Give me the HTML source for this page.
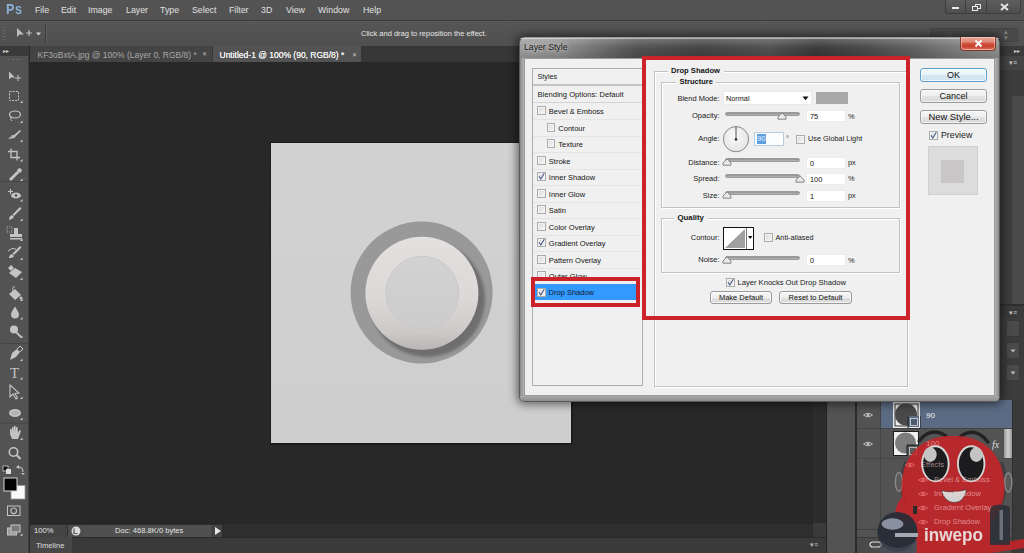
<!DOCTYPE html><html><head><meta charset="utf-8"><style>
*{margin:0;padding:0;box-sizing:border-box}
html,body{width:1024px;height:553px;overflow:hidden;background:#282828;font-family:"Liberation Sans",sans-serif}
.a{position:absolute;white-space:nowrap}
.mi{position:absolute;top:4px;font-size:8.8px;color:#e0e0e0;line-height:13px;white-space:nowrap}
.lst{font-size:7.4px;line-height:10px;color:#202020}
.lbl{font-size:7.4px;line-height:10px;color:#202020;text-align:right}
.cb{position:absolute;width:9px;height:9px;border:1px solid #ababab;background:linear-gradient(135deg,#d8d8d8,#f8f8f8);box-shadow:inset 0 0 0 1px #f4f4f4}
.inp{position:absolute;background:#fff;border:1px solid #e3e3e3;border-top-color:#abadb3;font-size:7.4px;line-height:10px;color:#111;padding-left:4px}
.btn{position:absolute;border:1px solid #707070;border-radius:2px;background:linear-gradient(#f2f2f2 0%,#ebebeb 50%,#dddddd 51%,#cfcfcf 100%);text-align:center;color:#111}
.fs{position:absolute;border:1px solid #d5dfe5;box-shadow:inset 1px 1px 0 #fff, 1px 1px 0 #fff;border-color:#bcbcbc}
.leg{position:absolute;background:#f0f0f0;font-size:7.6px;font-weight:bold;line-height:10px;color:#111;padding:0 3px}
.trk{position:absolute;height:4px;border-radius:2px;background:linear-gradient(#9a9a9a,#c8c8c8);border:1px solid #8a8a8a}
</style></head><body>
<div class="a" style="left:0px;top:0px;width:1024px;height:21px;background:#535353;border-bottom:1px solid #3a3a3a"></div>
<div class="a" style="left:5.5px;top:0px;font-size:15px;font-weight:bold;color:#8ab0d6;line-height:17px;letter-spacing:0.6px;transform:scaleX(0.84);transform-origin:0 0">Ps</div>
<div class="mi" style="left:35px">File</div>
<div class="mi" style="left:61px">Edit</div>
<div class="mi" style="left:88px">Image</div>
<div class="mi" style="left:126px">Layer</div>
<div class="mi" style="left:160px">Type</div>
<div class="mi" style="left:192px">Select</div>
<div class="mi" style="left:229px">Filter</div>
<div class="mi" style="left:261px">3D</div>
<div class="mi" style="left:286px">View</div>
<div class="mi" style="left:318px">Window</div>
<div class="mi" style="left:363px">Help</div>
<div class="a" style="left:945px;top:0px;width:21px;height:14px;background:linear-gradient(#5e5e5e,#4e4e4e);border:1px solid #3e3e3e;border-top:none;border-radius:0 0 0 3px"></div>
<div class="a" style="left:966px;top:0px;width:21px;height:14px;background:linear-gradient(#5e5e5e,#4e4e4e);border:1px solid #3e3e3e;border-top:none;border-left:none"></div>
<div class="a" style="left:987px;top:0px;width:34px;height:14px;background:linear-gradient(#5e5e5e,#4e4e4e);border:1px solid #3e3e3e;border-top:none;border-left:none;border-radius:0 0 3px 0"></div>
<div class="a" style="left:952px;top:7px;width:7px;height:2px;background:#e8e8e8"></div>
<div class="a" style="left:975px;top:4px;width:6px;height:5px;border:1px solid #e8e8e8"></div>
<div class="a" style="left:972px;top:6px;width:6px;height:5px;border:1px solid #e8e8e8;background:#555"></div>
<svg class="a" style="left:1000px;top:3px" width="9" height="8"><path d="M1 1 L8 7 M8 1 L1 7" stroke="#e8e8e8" stroke-width="1.8"/></svg>
<div class="a" style="left:0px;top:21px;width:1024px;height:26px;background:linear-gradient(#555,#4f4f4f);border-top:1px solid #5e5e5e;border-bottom:1px solid #333"></div>
<div class="a" style="left:2px;top:27px;width:4px;height:1px;background:#626262"></div>
<div class="a" style="left:2px;top:30px;width:4px;height:1px;background:#626262"></div>
<div class="a" style="left:2px;top:33px;width:4px;height:1px;background:#626262"></div>
<div class="a" style="left:2px;top:36px;width:4px;height:1px;background:#626262"></div>
<div class="a" style="left:2px;top:39px;width:4px;height:1px;background:#626262"></div>
<svg class="a" style="left:14px;top:26px" width="32" height="16" viewBox="0 0 32 16"><path d="M3 2 L3 11 L5.5 8.5 L10 8.5 Z" fill="#bdbdbd"/><path d="M12 7 H18 M15 4 V10" stroke="#bdbdbd" stroke-width="1.2"/><path d="M22 6.5 L27 6.5 L24.5 9.5 Z" fill="#d6d6d6"/></svg>
<div class="a" style="left:45px;top:24px;width:1px;height:20px;background:#3e3e3e;box-shadow:1px 0 0 #5e5e5e"></div>
<div class="a" style="left:361px;top:28.0px;font-size:7.5px;line-height:12px;color:#e6e6e6;font-weight:normal;">Click and drag to reposition the effect.</div>
<div class="a" style="left:930px;top:28px;width:88px;height:14px;background:#4a4a4a;border:1px solid #444;border-radius:2px"></div>
<div class="a" style="left:944px;top:29.0px;font-size:7.5px;line-height:12px;color:#5c5c5c;font-weight:normal;">10</div>
<div class="a" style="left:1004px;top:29px;font-size:7px;line-height:6px;color:#888">▴<br>▾</div>
<div class="a" style="left:0px;top:46px;width:1024px;height:16px;background:#373737"></div>
<div class="a" style="left:30px;top:46px;width:182px;height:16px;background:#444444"></div>
<div class="a" style="left:37.5px;top:49.0px;font-size:8.5px;line-height:12px;color:#a8a8a8;font-weight:normal;">KF3oBxtA.jpg @ 100% (Layer 0, RGB/8) *</div>
<div class="a" style="left:202px;top:48.0px;font-size:6px;line-height:12px;color:#bdbdbd;font-weight:normal;">✕</div>
<div class="a" style="left:213px;top:46px;width:148px;height:16px;background:#535353"></div>
<div class="a" style="left:219.5px;top:49.0px;font-size:8.5px;line-height:12px;color:#f2f2f2;font-weight:normal;text-shadow:0 0 0.4px #fff">Untitled-1 @ 100% (90, RGB/8) *</div>
<div class="a" style="left:352px;top:48.5px;font-size:6px;line-height:12px;color:#c8c8c8;font-weight:normal;">✕</div>
<div class="a" style="left:0px;top:46px;width:29px;height:10px;background:#3a3a3a"></div>
<div class="a" style="left:3px;top:48px;font-size:6px;line-height:7px;color:#cfcfcf">▸▸</div>
<div class="a" style="left:0px;top:56px;width:29px;height:497px;background:#535353;border-right:1px solid #404040"></div>
<div class="a" style="left:8.0px;top:59px;width:1.2px;height:1px;background:#767676"></div>
<div class="a" style="left:10.5px;top:59px;width:1.2px;height:1px;background:#767676"></div>
<div class="a" style="left:13.0px;top:59px;width:1.2px;height:1px;background:#767676"></div>
<div class="a" style="left:15.5px;top:59px;width:1.2px;height:1px;background:#767676"></div>
<div class="a" style="left:18.0px;top:59px;width:1.2px;height:1px;background:#767676"></div>
<div class="a" style="left:20.5px;top:59px;width:1.2px;height:1px;background:#767676"></div>
<svg class="a" style="left:0;top:0" width="30" height="553" viewBox="0 0 30 553"><path d="M9 71.5 L9 79.5 L11 77.5 L15 77.5 Z" fill="#c4c4c4"/><path d="M15 78.0 H21 M18 75.0 V81.0" stroke="#c4c4c4" stroke-width="1"/><rect x="9.5" y="91.5" width="9" height="9" fill="none" stroke="#c4c4c4" stroke-width="1" stroke-dasharray="2 1.2"/><path d="M20 103 L22.5 100.5 L22.5 103 Z" fill="#d0d0d0"/><ellipse cx="15" cy="114.5" rx="5.5" ry="3.5" fill="none" stroke="#c4c4c4" stroke-width="1.2"/><path d="M11 117 Q10 120 12 121" stroke="#c4c4c4" fill="none"/><path d="M20 123 L22.5 120.5 L22.5 123 Z" fill="#d0d0d0"/><path d="M9 139 L13 136 L20 130 L21 131 L14 138 Z" fill="#c4c4c4"/><path d="M9 139 Q12 134 15 136" stroke="#c4c4c4" fill="none"/><path d="M20 142 L22.5 139.5 L22.5 142 Z" fill="#d0d0d0"/><path d="M11 148.5 V157.5 H20 M8 151.5 H17 V160.5" stroke="#c4c4c4" stroke-width="1.3" fill="none"/><path d="M20 161.5 L22.5 159.0 L22.5 161.5 Z" fill="#d0d0d0"/><path d="M9 179 L17 171 L19 173 L11 181 Z" fill="#c4c4c4"/><circle cx="19.5" cy="170.5" r="2.2" fill="#c4c4c4"/><path d="M20 181 L22.5 178.5 L22.5 181 Z" fill="#d0d0d0"/><rect x="1" y="181" width="27" height="1" fill="#454545"/><ellipse cx="16" cy="195.5" rx="5" ry="3" fill="#c4c4c4"/><circle cx="16" cy="195.5" r="1.3" fill="#535353"/><path d="M8 191.5 H13 M10.5 189.0 V194.0" stroke="#c4c4c4" stroke-width="1.2"/><path d="M20 201.5 L22.5 199.0 L22.5 201.5 Z" fill="#d0d0d0"/><path d="M20 207 L21.5 208.5 L14 216 L12.5 214.5 Z" fill="#c4c4c4"/><path d="M12 215 Q9 216 9 220 Q13 219 14 217 Z" fill="#c4c4c4"/><path d="M20 221 L22.5 218.5 L22.5 221 Z" fill="#d0d0d0"/><rect x="14" y="228" width="4" height="6" fill="#c4c4c4"/><rect x="10" y="234" width="12" height="3" fill="#c4c4c4"/><rect x="10" y="238" width="12" height="1.5" fill="#c4c4c4"/><rect x="7" y="227" width="5" height="5" fill="none" stroke="#c4c4c4" stroke-width="0.8" stroke-dasharray="1 1"/><path d="M20 241 L22.5 238.5 L22.5 241 Z" fill="#d0d0d0"/><path d="M20 246 L21.5 247.5 L14 255 L12.5 253.5 Z" fill="#c4c4c4"/><path d="M12 254 Q9 255 9 258 Q13 258 14 256 Z" fill="#c4c4c4"/><path d="M8 251 Q12 247 16 249" stroke="#c4c4c4" fill="none"/><path d="M20 260 L22.5 257.5 L22.5 260 Z" fill="#d0d0d0"/><path d="M9 273 L15 268 L22 272 L16 278 Z" fill="#c4c4c4"/><path d="M8 268 L11 271 L14 268 L11 265 Z" fill="#c4c4c4"/><path d="M20 280 L22.5 277.5 L22.5 280 Z" fill="#d0d0d0"/><path d="M9 294 L15 289 L21 295 L15 300 Z" fill="#c4c4c4"/><path d="M13 291 Q12 286 15 287" stroke="#c4c4c4" fill="none"/><circle cx="21" cy="298" r="1.5" fill="#c4c4c4"/><path d="M20 301 L22.5 298.5 L22.5 301 Z" fill="#d0d0d0"/><path d="M15 306.6 Q11 312.6 11 314.6 A4 4 0 0 0 19 314.6 Q19 312.6 15 306.6 Z" fill="#c4c4c4"/><path d="M20 319.6 L22.5 317.1 L22.5 319.6 Z" fill="#d0d0d0"/><circle cx="14" cy="329.5" r="4" fill="#c4c4c4"/><path d="M16.5 332.5 L21 337" stroke="#c4c4c4" stroke-width="1.8"/><path d="M20 338 L22.5 335.5 L22.5 338 Z" fill="#d0d0d0"/><rect x="1" y="343" width="27" height="1" fill="#454545"/><rect x="1" y="422.5" width="27" height="1" fill="#454545"/><path d="M10 360 L12 353 L17 349 L20 352 L16 357 Z" fill="#c4c4c4"/><path d="M17 349 L20 346 L23 349 L20 352" fill="none" stroke="#c4c4c4"/><path d="M20 361 L22.5 358.5 L22.5 361 Z" fill="#d0d0d0"/><text x="14.5" y="377.9" font-family="Liberation Serif" font-size="15" fill="#c4c4c4" text-anchor="middle">T</text><path d="M20 379.4 L22.5 376.9 L22.5 379.4 Z" fill="#d0d0d0"/><path d="M10 385 L10 397 L13 394 L16 399 L17.5 398 L15 393.5 L19 393 Z" fill="none" stroke="#c4c4c4" stroke-width="1.1"/><path d="M20 399 L22.5 396.5 L22.5 399 Z" fill="#d0d0d0"/><ellipse cx="15" cy="413" rx="6" ry="4" fill="#c4c4c4"/><ellipse cx="15" cy="413" rx="4" ry="2.3" fill="#9a9a9a" opacity="0.4"/><path d="M20 420 L22.5 417.5 L22.5 420 Z" fill="#d0d0d0"/><path d="M10 434 L10 429 L11.5 429 L12 432 L12 427 L13.5 427 L14 432 L14 426 L15.5 426 L16 432 L16 427 L17.5 427 L18 433 L19.5 430 L21 431 L18 439 L12 439 Z" fill="#c4c4c4"/><path d="M20 440 L22.5 437.5 L22.5 440 Z" fill="#d0d0d0"/><circle cx="13.5" cy="452.0" r="4.2" fill="none" stroke="#c4c4c4" stroke-width="1.6"/><path d="M16.5 455.0 L20.5 459.0" stroke="#c4c4c4" stroke-width="2"/><rect x="3" y="466" width="5" height="5" fill="#111" stroke="#ccc" stroke-width="0.8"/><rect x="6" y="469" width="5" height="5" fill="#ddd"/><path d="M18 467 Q23 467 23 472" stroke="#c4c4c4" fill="none" stroke-width="1.1"/><path d="M16 467 L19 465 L19 469 Z M21 473 L23 475 L25 473 Z" fill="#c4c4c4"/><rect x="11" y="485.5" width="14" height="13.5" fill="#fafafa" stroke="#9a9a9a" stroke-width="0.8"/><rect x="4" y="478" width="13" height="13" fill="#050505" stroke="#d8d8d8" stroke-width="1"/><rect x="7.5" y="506" width="12.5" height="9.5" fill="none" stroke="#c4c4c4" stroke-width="1"/><circle cx="13.7" cy="510.8" r="2.8" fill="none" stroke="#c4c4c4" stroke-width="1.1"/><rect x="7.5" y="528" width="9" height="7" fill="#9a9a9a" stroke="#c4c4c4" stroke-width="1"/><rect x="11" y="525" width="9" height="7" fill="#7a7a7a" stroke="#c4c4c4" stroke-width="1"/><path d="M20 535.7 L22.5 533.2 L22.5 535.7 Z" fill="#d0d0d0"/></svg>
<div class="a" style="left:30px;top:62px;width:797px;height:463px;background:#282828"></div>
<div class="a" style="left:813px;top:62px;width:13px;height:462px;background:#2c2c2c"></div>
<div class="a" style="left:30px;top:524px;width:796px;height:13px;background:#2c2c2c"></div>
<div class="a" style="left:269.5px;top:141.5px;width:303px;height:303px;background:#1c1c1c;filter:blur(0.6px)"></div>
<div class="a" style="left:271px;top:143px;width:300px;height:300px;background:linear-gradient(#d3d2d2,#cfcece)"></div>
<svg class="a" style="left:340px;top:210px" width="170" height="170" viewBox="340 210 170 170"><defs><linearGradient id="kn" x1="0" y1="0" x2="0" y2="1"><stop offset="0" stop-color="#e4e0e0"/><stop offset="0.55" stop-color="#dcd8d8"/><stop offset="0.85" stop-color="#cdc9c9"/><stop offset="1" stop-color="#b9b5b5"/></linearGradient><linearGradient id="ic" x1="0" y1="0" x2="0" y2="1"><stop offset="0" stop-color="#d2d2d2"/><stop offset="1" stop-color="#cccccc"/></linearGradient><filter id="bl" x="-20%" y="-20%" width="140%" height="140%"><feGaussianBlur stdDeviation="1.6"/></filter></defs><circle cx="421.6" cy="292.5" r="71" fill="#999999"/><circle cx="427" cy="299" r="58" fill="#6e6e6e" filter="url(#bl)"/><circle cx="421.9" cy="293.2" r="56.5" fill="url(#kn)"/><circle cx="422.3" cy="292.8" r="36.5" fill="url(#ic)" stroke="#c6c4c4" stroke-width="0.8"/></svg>
<div class="a" style="left:30px;top:523px;width:796px;height:14px;background:#2e2e2e;border-top:1px solid #262626"></div>
<div class="a" style="left:813px;top:523px;width:13px;height:14px;background:#3a3a3a"></div>
<div class="a" style="left:30px;top:525px;width:37px;height:12px;background:#444444"></div>
<div class="a" style="left:34px;top:524.5px;font-size:7.6px;line-height:12px;color:#e4e4e4;font-weight:normal;">100%</div>
<div class="a" style="left:68px;top:525px;width:16px;height:12px;background:#4e4e4e"></div>
<svg class="a" style="left:69px;top:525px" width="14" height="12"><circle cx="7" cy="6" r="4.5" fill="#dadada"/><path d="M5 3.5 V8.5 H8.5" stroke="#555" stroke-width="1.2" fill="none"/></svg>
<div class="a" style="left:84px;top:525px;width:127px;height:12px;background:#505050"></div>
<div class="a" style="left:115px;top:524.5px;font-size:7.6px;line-height:12px;color:#e4e4e4;font-weight:normal;">Doc: 468.8K/0 bytes</div>
<div class="a" style="left:211px;top:525px;width:11px;height:12px;background:#444444"></div>
<svg class="a" style="left:213px;top:526px" width="9" height="10"><path d="M2 1 L8 5 L2 9 Z" fill="#e6e6e6"/></svg>
<div class="a" style="left:30px;top:537px;width:797px;height:16px;background:#3a3a3a;border-top:1px solid #2a2a2a"></div>
<div class="a" style="left:30px;top:537px;width:42px;height:16px;background:#474747"></div>
<div class="a" style="left:36px;top:539.5px;font-size:7.6px;line-height:12px;color:#dedede;font-weight:normal;">Timeline</div>
<div class="a" style="left:810px;top:540px;font-size:7px;line-height:9px;color:#bbb">▾≡</div>
<div class="a" style="left:29px;top:46px;width:1px;height:507px;background:#2a2a2a"></div>
<div class="a" style="left:826px;top:62px;width:1px;height:491px;background:#222"></div>
<div class="a" style="left:827px;top:46px;width:28px;height:507px;background:#535353"></div>
<div class="a" style="left:855px;top:46px;width:2px;height:507px;background:#2c2c2c"></div>
<div class="a" style="left:857px;top:46px;width:167px;height:507px;background:#3f3f3f"></div>
<div class="a" style="left:999px;top:46px;width:25px;height:10px;background:#3a3a3a"></div>
<div class="a" style="left:1014px;top:48px;font-size:6px;line-height:7px;color:#cfcfcf">▸▸</div>
<div class="a" style="left:999px;top:56px;width:25px;height:14px;background:#454545"></div>
<div class="a" style="left:1009px;top:58px;font-size:7px;line-height:9px;color:#c8c8c8">▾≡</div>
<div class="a" style="left:999px;top:70px;width:25px;height:330px;background:#3c3c3c"></div>
<div class="a" style="left:1012px;top:96px;width:12px;height:208px;background:#4a4a4a"></div>
<div class="a" style="left:999px;top:304px;width:25px;height:2px;background:#2e2e2e"></div>
<div class="a" style="left:999px;top:306px;width:25px;height:11px;background:#3a3a3a"></div>
<div class="a" style="left:1009px;top:308px;font-size:7px;line-height:9px;color:#c8c8c8">▾≡</div>
<div class="a" style="left:1006px;top:320px;width:14px;height:17px;background:#4a4a4a;border:1px solid #3a3a3a"></div>
<div class="a" style="left:1006px;top:342px;width:14px;height:17px;background:#4a4a4a;border:1px solid #3a3a3a"></div>
<div class="a" style="left:1006px;top:364px;width:14px;height:17px;background:#4a4a4a;border:1px solid #3a3a3a"></div>
<svg class="a" style="left:1010px;top:349px" width="6" height="4"><path d="M0.5 0.5 L5.5 0.5 L3 3.5 Z" fill="#bbb"/></svg>
<svg class="a" style="left:1010px;top:371px" width="6" height="4"><path d="M0.5 0.5 L5.5 0.5 L3 3.5 Z" fill="#bbb"/></svg>
<div class="a" style="left:857px;top:400px;width:155px;height:153px;background:#535353"></div>
<div class="a" style="left:1012px;top:400px;width:12px;height:153px;background:#3a3a3a;border-left:1px solid #2e2e2e"></div>
<div class="a" style="left:880px;top:400px;width:1px;height:130px;background:#444"></div>
<div class="a" style="left:881px;top:400px;width:131px;height:28px;background:#5b6b84"></div>
<div class="a" style="left:857px;top:428px;width:155px;height:1px;background:#444"></div>
<div class="a" style="left:857px;top:458px;width:155px;height:1px;background:#484848"></div>
<svg class="a" style="left:862px;top:410.5px" width="12" height="8"><path d="M1.5 4 Q6 0.5 10.5 4 Q6 7.5 1.5 4 Z" fill="none" stroke="#bcbcbc" stroke-width="1"/><circle cx="6" cy="4" r="1.5" fill="#bcbcbc"/></svg>
<svg class="a" style="left:862px;top:440px" width="12" height="8"><path d="M1.5 4 Q6 0.5 10.5 4 Q6 7.5 1.5 4 Z" fill="none" stroke="#bcbcbc" stroke-width="1"/><circle cx="6" cy="4" r="1.5" fill="#bcbcbc"/></svg>
<svg class="a" style="left:893px;top:402px" width="28" height="27"><rect x="0.5" y="0.5" width="26" height="25" fill="#f4f4f4" stroke="#e8e8e8"/><rect x="2" y="2" width="23" height="22" fill="#ececec" stroke="#1e1e1e" stroke-width="0.9"/><circle cx="13" cy="12.5" r="11" fill="#4a4a4a"/><rect x="15" y="14" width="12" height="12" fill="#5b6b84"/><path d="M15 14 V26 H27 V14" fill="none" stroke="#1a1a1a" stroke-width="1"/><path d="M15.5 25.5 H26.5 V14" fill="none" stroke="#eee" stroke-width="1"/><rect x="17.5" y="16.5" width="7" height="7" fill="#4e5a6e" stroke="#ddd" stroke-width="0.8"/></svg>
<div class="a" style="left:926px;top:409.5px;font-size:8px;line-height:12px;color:#f0f0f0;font-weight:normal;">90</div>
<svg class="a" style="left:893px;top:431px" width="26" height="25"><rect x="0.5" y="0.5" width="25" height="24" fill="#f0f0f0" stroke="#1e1e1e" stroke-width="1"/><circle cx="12.5" cy="12" r="10.5" fill="#7c7c7c"/><rect x="14" y="14" width="12" height="11" fill="#535353"/><path d="M14 14 V25 M14 14 H26" fill="none" stroke="#1a1a1a" stroke-width="1"/><rect x="16.5" y="16.5" width="7" height="7" fill="#5a5a5a" stroke="#ccc" stroke-width="0.8"/></svg>
<div class="a" style="left:992px;top:438.5px;font-size:10px;line-height:12px;color:#d8d8d8;font-weight:normal;font-family:'Liberation Serif'"><i>fx</i></div>
<div class="a" style="left:1004px;top:429px;width:8px;height:29px;background:linear-gradient(90deg,#9a9a9a,#d0d0d0,#9a9a9a)"></div>
<div class="a" style="left:857px;top:529px;width:155px;height:1px;background:#3e3e3e"></div>
<div class="a" style="left:857px;top:537px;width:155px;height:16px;background:#4a4a4a;border-top:1px solid #3a3a3a"></div>
<svg class="a" style="left:868px;top:540px" width="16" height="10"><rect x="2" y="2" width="11" height="5" rx="2.5" fill="none" stroke="#ddd" stroke-width="1.2"/></svg>
<div class="a" style="left:519px;top:37px;width:481px;height:365px;border-radius:6px 6px 5px 5px;background:linear-gradient(90deg,#8e8e8e,#a9a9a9 3%,#b4b4b4 50%,#a2a2a2 97%,#8a8a8a);border:1px solid #5a5a5a;border-top-color:#9a9a9a;box-shadow:0 0 10px 2px rgba(0,0,0,0.55)"></div>
<div class="a" style="left:520px;top:38px;width:479px;height:20px;border-radius:5px 5px 0 0;background:linear-gradient(90deg,#9a9a9a 0%,#8e8e8e 8%,#6e6e6e 16%,#505050 24%,#424242 38%,#4e4e4e 52%,#383838 62%,#474747 72%,#5e5e5e 82%,#7c7c7c 92%,#8c8c8c 100%)"></div>
<div class="a" style="left:520px;top:38px;width:479px;height:20px;border-radius:5px 5px 0 0;background:linear-gradient(rgba(255,255,255,0.25) 0,rgba(255,255,255,0.05) 40%,rgba(0,0,0,0) 60%,rgba(0,0,0,0.1) 100%)"></div>
<div class="a" style="left:520px;top:38px;width:479px;height:1px;background:rgba(255,255,255,0.45);border-radius:5px 5px 0 0"></div>
<div class="a" style="left:524px;top:42px;font-size:8.7px;line-height:11px;color:#111;text-shadow:0 0 3px rgba(230,230,230,0.9),0 0 6px rgba(220,220,220,0.6)">Layer Style</div>
<div class="a" style="left:960px;top:37px;width:36px;height:14px;border-radius:0 0 4px 4px;background:linear-gradient(#eaa898 0%,#e08a78 35%,#cc4a36 55%,#c84230 75%,#dc7a66 100%);border:1px solid #7a3a30;border-top:none;box-shadow:inset 0 0 0 1px rgba(255,215,205,0.55)"></div>
<svg class="a" style="left:974px;top:39px" width="9" height="9"><path d="M1.5 1.5 L7.5 7.5 M7.5 1.5 L1.5 7.5" stroke="#fff" stroke-width="2"/></svg>
<div class="a" style="left:520px;top:58px;width:4px;height:339px;background:linear-gradient(90deg,#8a8a8a,#b4b4b4)"></div>
<div class="a" style="left:995px;top:58px;width:4px;height:339px;background:linear-gradient(90deg,#b4b4b4,#8a8a8a)"></div>
<div class="a" style="left:520px;top:396px;width:479px;height:5px;background:linear-gradient(#a8a8a8,#8e8e8e);border-radius:0 0 4px 4px"></div>
<div class="a" style="left:524px;top:58px;width:471px;height:338px;background:#f0f0f0;border:1px solid #9a9a9a"></div>
<div class="a" style="left:532px;top:68px;width:111px;height:318px;background:#f0f0f0;border:1px solid #acacac"></div>
<div class="a" style="left:533px;top:84px;width:109px;height:2px;background:#c4c4c4"></div>
<div class="a" style="left:533px;top:102px;width:109px;height:1px;background:#d4d4d4"></div>
<div class="a" style="left:537.5px;top:71.0px;font-size:7.2px;line-height:12px;color:#202020;font-weight:normal;">Styles</div>
<div class="a" style="left:537.5px;top:88.5px;font-size:7.6px;line-height:12px;color:#202020;font-weight:normal;">Blending Options: Default</div>
<div class="cb" style="left:537px;top:106px;width:8.5px;height:8.5px"></div>
<div class="a" style="left:548.8px;top:106.0px;font-size:7.5px;line-height:12px;color:#141414;font-weight:normal;">Bevel &amp; Emboss</div>
<div class="a" style="left:533px;top:119px;width:109px;height:1px;background:#e4e4e4"></div>
<div class="cb" style="left:546.5px;top:123px;width:8.5px;height:8.5px"></div>
<div class="a" style="left:558.3px;top:122.5px;font-size:7.5px;line-height:12px;color:#141414;font-weight:normal;">Contour</div>
<div class="a" style="left:533px;top:136px;width:109px;height:1px;background:#e4e4e4"></div>
<div class="cb" style="left:546.5px;top:139px;width:8.5px;height:8.5px"></div>
<div class="a" style="left:558.3px;top:139.0px;font-size:7.5px;line-height:12px;color:#141414;font-weight:normal;">Texture</div>
<div class="a" style="left:533px;top:152px;width:109px;height:1px;background:#e4e4e4"></div>
<div class="cb" style="left:537px;top:156px;width:8.5px;height:8.5px"></div>
<div class="a" style="left:548.8px;top:155.5px;font-size:7.5px;line-height:12px;color:#141414;font-weight:normal;">Stroke</div>
<div class="a" style="left:533px;top:169px;width:109px;height:1px;background:#e4e4e4"></div>
<div class="cb" style="left:537px;top:172px;width:8.5px;height:8.5px"></div>
<svg class="a" style="left:537px;top:172px" width="8.5" height="8.5"><path d="M2 4.3 L3.8 7 L7.3 1.3" stroke="#4a5c88" stroke-width="1.1" fill="none"/></svg>
<div class="a" style="left:548.8px;top:172.0px;font-size:7.5px;line-height:12px;color:#141414;font-weight:normal;">Inner Shadow</div>
<div class="a" style="left:533px;top:185px;width:109px;height:1px;background:#e4e4e4"></div>
<div class="cb" style="left:537px;top:189px;width:8.5px;height:8.5px"></div>
<div class="a" style="left:548.8px;top:188.5px;font-size:7.5px;line-height:12px;color:#141414;font-weight:normal;">Inner Glow</div>
<div class="a" style="left:533px;top:202px;width:109px;height:1px;background:#e4e4e4"></div>
<div class="cb" style="left:537px;top:205px;width:8.5px;height:8.5px"></div>
<div class="a" style="left:548.8px;top:205.0px;font-size:7.5px;line-height:12px;color:#141414;font-weight:normal;">Satin</div>
<div class="a" style="left:533px;top:218px;width:109px;height:1px;background:#e4e4e4"></div>
<div class="cb" style="left:537px;top:222px;width:8.5px;height:8.5px"></div>
<div class="a" style="left:548.8px;top:221.5px;font-size:7.5px;line-height:12px;color:#141414;font-weight:normal;">Color Overlay</div>
<div class="a" style="left:533px;top:235px;width:109px;height:1px;background:#e4e4e4"></div>
<div class="cb" style="left:537px;top:238px;width:8.5px;height:8.5px"></div>
<svg class="a" style="left:537px;top:238px" width="8.5" height="8.5"><path d="M2 4.3 L3.8 7 L7.3 1.3" stroke="#4a5c88" stroke-width="1.1" fill="none"/></svg>
<div class="a" style="left:548.8px;top:238.0px;font-size:7.5px;line-height:12px;color:#141414;font-weight:normal;">Gradient Overlay</div>
<div class="a" style="left:533px;top:251px;width:109px;height:1px;background:#e4e4e4"></div>
<div class="cb" style="left:537px;top:255px;width:8.5px;height:8.5px"></div>
<div class="a" style="left:548.8px;top:254.5px;font-size:7.5px;line-height:12px;color:#141414;font-weight:normal;">Pattern Overlay</div>
<div class="a" style="left:533px;top:268px;width:109px;height:1px;background:#e4e4e4"></div>
<div class="cb" style="left:537px;top:271px;width:8.5px;height:8.5px"></div>
<div class="a" style="left:548.8px;top:271.0px;font-size:7.5px;line-height:12px;color:#141414;font-weight:normal;">Outer Glow</div>
<div class="a" style="left:533px;top:284px;width:109px;height:1px;background:#e4e4e4"></div>
<div class="a" style="left:535px;top:284px;width:101px;height:16px;background:#3399ff"></div>
<div class="cb" style="left:537px;top:288px;width:9px;height:9px"></div>
<svg class="a" style="left:537px;top:288px" width="9" height="9"><path d="M2 4.3 L3.8 7 L7.3 1.3" stroke="#4a5c88" stroke-width="1.1" fill="none"/></svg>
<div class="a" style="left:548.6px;top:286.9px;font-size:7.5px;line-height:12px;color:#0e1a2a;font-weight:normal;">Drop Shadow</div>
<div class="a" style="left:531px;top:277px;width:109px;height:30px;border:4.5px solid #cc2229"></div>
<div class="a" style="left:654px;top:71px;width:254px;height:316px;border:1px solid #c2c2c2;box-shadow:inset 1px 1px 0 #fff,1px 1px 0 #fff"></div>
<div class="a" style="left:661px;top:82px;width:239px;height:126px;border:1px solid #c2c2c2;box-shadow:inset 1px 1px 0 #fff,1px 1px 0 #fff"></div>
<div class="a" style="left:661px;top:218px;width:239px;height:55px;border:1px solid #c2c2c2;box-shadow:inset 1px 1px 0 #fff,1px 1px 0 #fff"></div>
<div class="a" style="left:668px;top:65px;width:56px;height:12px;background:#f0f0f0"></div>
<div class="a" style="left:671px;top:64.8px;font-size:7.6px;line-height:12px;color:#151515;font-weight:bold;">Drop Shadow</div>
<div class="a" style="left:676px;top:76px;width:40px;height:12px;background:#f0f0f0"></div>
<div class="a" style="left:679.5px;top:75.5px;font-size:7.5px;line-height:12px;color:#151515;font-weight:bold;">Structure</div>
<div class="a" style="left:674px;top:212px;width:34px;height:12px;background:#f0f0f0"></div>
<div class="a" style="left:677.5px;top:212.3px;font-size:7.8px;line-height:12px;color:#151515;font-weight:bold;">Quality</div>
<div class="a" style="right:304.5px;top:92.6px;font-size:7.5px;line-height:12px;color:#202020;font-weight:normal;text-align:right;">Blend Mode:</div>
<div class="a" style="left:723px;top:91px;width:89px;height:14px;background:#fff;border:1px solid #eaeaea"></div>
<div class="a" style="left:726px;top:92.6px;font-size:7.3px;line-height:12px;color:#111;font-weight:normal;">Normal</div>
<svg class="a" style="left:802px;top:96px" width="7" height="5"><path d="M0.5 0.5 L6.5 0.5 L3.5 4.2 Z" fill="#111"/></svg>
<div class="a" style="left:816px;top:92px;width:32px;height:12px;background:#a9a9a9"></div>
<div class="a" style="right:304.5px;top:110.2px;font-size:7.5px;line-height:12px;color:#202020;font-weight:normal;text-align:right;">Opacity:</div>
<div class="a" style="left:725px;top:112px;width:75px;height:4px;border-radius:2px;background:linear-gradient(#8f8f8f,#b9b9b9);border:1px solid #9a9a9a"></div>
<svg class="a" style="left:776.5px;top:112.3px" width="10" height="8"><path d="M5 0.8 L9 5 L9 7.2 L1 7.2 L1 5 Z" fill="#e8e8e8" stroke="#7a7a7a" stroke-width="0.9"/></svg>
<div class="a" style="left:806px;top:110px;width:40px;height:12px;background:#fff;border:1px solid #ececec"></div>
<div class="a" style="left:810px;top:110.8px;font-size:7.4px;line-height:12px;color:#111;font-weight:normal;">75</div>
<div class="a" style="left:848px;top:110.5px;font-size:7.4px;line-height:12px;color:#202020;font-weight:normal;">%</div>
<div class="a" style="right:304.5px;top:133.0px;font-size:7.5px;line-height:12px;color:#202020;font-weight:normal;text-align:right;">Angle:</div>
<svg class="a" style="left:722px;top:125px" width="28" height="28"><defs><radialGradient id="ag" cx="0.45" cy="0.4" r="0.6"><stop offset="0" stop-color="#fbfbfb"/><stop offset="1" stop-color="#e4e4e4"/></radialGradient></defs><circle cx="14" cy="14.2" r="12.6" fill="url(#ag)" stroke="#7e7e7e" stroke-width="0.9"/><path d="M14 14.2 V1.6" stroke="#555" stroke-width="1"/><circle cx="14" cy="14.4" r="1.3" fill="#333"/></svg>
<div class="a" style="left:754px;top:132px;width:30px;height:14px;background:#fbfdff;border:1px solid #b8cde0"></div>
<div class="a" style="left:757px;top:134px;width:8.5px;height:10px;background:#5d9ee0"></div>
<div class="a" style="left:757px;top:133.0px;font-size:7.6px;line-height:12px;color:#eaf2ff;font-weight:normal;">90</div>
<div class="a" style="left:786px;top:132.5px;font-size:7px;line-height:12px;color:#333;font-weight:normal;">°</div>
<div class="cb" style="left:796px;top:135px;width:9px;height:9px"></div>
<div class="a" style="left:808px;top:133.0px;font-size:7.35px;line-height:12px;color:#202020;font-weight:normal;">Use Global Light</div>
<div class="a" style="right:304.5px;top:156.5px;font-size:7.5px;line-height:12px;color:#202020;font-weight:normal;text-align:right;">Distance:</div>
<div class="a" style="left:725px;top:158px;width:75px;height:4px;border-radius:2px;background:linear-gradient(#8f8f8f,#b9b9b9);border:1px solid #9a9a9a"></div>
<svg class="a" style="left:721.5px;top:158.3px" width="10" height="8"><path d="M5 0.8 L9 5 L9 7.2 L1 7.2 L1 5 Z" fill="#e8e8e8" stroke="#7a7a7a" stroke-width="0.9"/></svg>
<div class="a" style="left:806px;top:157px;width:40px;height:12px;background:#fff;border:1px solid #ececec"></div>
<div class="a" style="left:810px;top:157.8px;font-size:7.4px;line-height:12px;color:#111;font-weight:normal;">0</div>
<div class="a" style="left:848px;top:156.5px;font-size:7.4px;line-height:12px;color:#202020;font-weight:normal;">px</div>
<div class="a" style="right:304.5px;top:173.0px;font-size:7.5px;line-height:12px;color:#202020;font-weight:normal;text-align:right;">Spread:</div>
<div class="a" style="left:725px;top:174px;width:75px;height:4px;border-radius:2px;background:linear-gradient(#8f8f8f,#b9b9b9);border:1px solid #9a9a9a"></div>
<svg class="a" style="left:795px;top:174.8px" width="10" height="8"><path d="M5 0.8 L9 5 L9 7.2 L1 7.2 L1 5 Z" fill="#e8e8e8" stroke="#7a7a7a" stroke-width="0.9"/></svg>
<div class="a" style="left:806px;top:173px;width:40px;height:12px;background:#fff;border:1px solid #ececec"></div>
<div class="a" style="left:810px;top:173.8px;font-size:7.4px;line-height:12px;color:#111;font-weight:normal;">100</div>
<div class="a" style="left:848px;top:173.0px;font-size:7.4px;line-height:12px;color:#202020;font-weight:normal;">%</div>
<div class="a" style="right:304.5px;top:189.6px;font-size:7.5px;line-height:12px;color:#202020;font-weight:normal;text-align:right;">Size:</div>
<div class="a" style="left:725px;top:191px;width:75px;height:4px;border-radius:2px;background:linear-gradient(#8f8f8f,#b9b9b9);border:1px solid #9a9a9a"></div>
<svg class="a" style="left:721.5px;top:191.3px" width="10" height="8"><path d="M5 0.8 L9 5 L9 7.2 L1 7.2 L1 5 Z" fill="#e8e8e8" stroke="#7a7a7a" stroke-width="0.9"/></svg>
<div class="a" style="left:806px;top:190px;width:40px;height:12px;background:#fff;border:1px solid #ececec"></div>
<div class="a" style="left:810px;top:190.8px;font-size:7.4px;line-height:12px;color:#111;font-weight:normal;">1</div>
<div class="a" style="left:848px;top:190.0px;font-size:7.4px;line-height:12px;color:#202020;font-weight:normal;">px</div>
<div class="a" style="right:304.5px;top:231.8px;font-size:7.5px;line-height:12px;color:#202020;font-weight:normal;text-align:right;">Contour:</div>
<div class="a" style="left:723px;top:227px;width:31px;height:23px;background:#fff;border:1px solid #111"></div>
<svg class="a" style="left:724px;top:228px" width="22" height="21"><path d="M1 20 L21 1 L21 20 Z" fill="#a0a0a0"/></svg>
<div class="a" style="left:746px;top:228px;width:1px;height:21px;background:#777"></div>
<svg class="a" style="left:748px;top:236px" width="5" height="4"><path d="M0 0 L4.5 0 L2.25 3 Z" fill="#111"/></svg>
<div class="cb" style="left:764px;top:233px;width:9px;height:9px"></div>
<div class="a" style="left:775.5px;top:231.8px;font-size:7.3px;line-height:12px;color:#202020;font-weight:normal;">Anti-aliased</div>
<div class="a" style="right:304.5px;top:254.0px;font-size:7.5px;line-height:12px;color:#202020;font-weight:normal;text-align:right;">Noise:</div>
<div class="a" style="left:725px;top:256px;width:75px;height:4px;border-radius:2px;background:linear-gradient(#8f8f8f,#b9b9b9);border:1px solid #9a9a9a"></div>
<svg class="a" style="left:721.5px;top:256.3px" width="10" height="8"><path d="M5 0.8 L9 5 L9 7.2 L1 7.2 L1 5 Z" fill="#e8e8e8" stroke="#7a7a7a" stroke-width="0.9"/></svg>
<div class="a" style="left:806px;top:254px;width:40px;height:12px;background:#fff;border:1px solid #ececec"></div>
<div class="a" style="left:810px;top:254.8px;font-size:7.4px;line-height:12px;color:#111;font-weight:normal;">0</div>
<div class="a" style="left:848px;top:254.5px;font-size:7.4px;line-height:12px;color:#202020;font-weight:normal;">%</div>
<div class="cb" style="left:726px;top:278px;width:9px;height:9px"></div>
<svg class="a" style="left:726px;top:278px" width="9" height="9"><path d="M2 4.3 L3.8 7 L7.3 1.3" stroke="#4a5c88" stroke-width="1.1" fill="none"/></svg>
<div class="a" style="left:737.5px;top:276.5px;font-size:7.6px;line-height:12px;color:#202020;font-weight:normal;">Layer Knocks Out Drop Shadow</div>
<div class="a" style="left:710px;top:291px;width:62px;height:13px;border:1px solid #9a9a9a;border-radius:3px;background:linear-gradient(#f6f6f6 0%,#eeeeee 50%,#e2e2e2 51%,#d8d8d8 100%);box-shadow:inset 0 0 0 1px rgba(255,255,255,0.7);text-align:center;font-size:7.5px;line-height:11px;color:#111">Make Default</div>
<div class="a" style="left:779px;top:291px;width:73px;height:13px;border:1px solid #9a9a9a;border-radius:3px;background:linear-gradient(#f6f6f6 0%,#eeeeee 50%,#e2e2e2 51%,#d8d8d8 100%);box-shadow:inset 0 0 0 1px rgba(255,255,255,0.7);text-align:center;font-size:7.5px;line-height:11px;color:#111">Reset to Default</div>
<div class="a" style="left:642px;top:56px;width:268px;height:264px;border:4px solid #cc2229"></div>
<div class="a" style="left:920px;top:68px;width:67px;height:14px;border:1px solid #5aa0cc;border-radius:3px;background:linear-gradient(#f4fafd 0%,#e6f2f8 50%,#d6e8f2 51%,#cfe3ee 100%);box-shadow:inset 0 0 0 1px rgba(255,255,255,0.7);text-align:center;font-size:9px;line-height:12px;color:#111">OK</div>
<div class="a" style="left:920px;top:89px;width:67px;height:14px;border:1px solid #9a9a9a;border-radius:3px;background:linear-gradient(#f6f6f6 0%,#eeeeee 50%,#e2e2e2 51%,#d8d8d8 100%);box-shadow:inset 0 0 0 1px rgba(255,255,255,0.7);text-align:center;font-size:9px;line-height:12px;color:#111">Cancel</div>
<div class="a" style="left:920px;top:110px;width:67px;height:14px;border:1px solid #9a9a9a;border-radius:3px;background:linear-gradient(#f6f6f6 0%,#eeeeee 50%,#e2e2e2 51%,#d8d8d8 100%);box-shadow:inset 0 0 0 1px rgba(255,255,255,0.7);text-align:center;font-size:9.4px;line-height:12px;color:#111">New Style...</div>
<div class="cb" style="left:929px;top:130.5px;width:9px;height:9px"></div>
<svg class="a" style="left:929px;top:130.5px" width="9" height="9"><path d="M2 4.3 L3.8 7 L7.3 1.3" stroke="#4a5c88" stroke-width="1.1" fill="none"/></svg>
<div class="a" style="left:941px;top:129.3px;font-size:8.8px;line-height:12px;color:#202020;font-weight:normal;">Preview</div>
<div class="a" style="left:928px;top:146px;width:50px;height:49px;background:#dcdcdc;border:1px solid #cfcfcf"></div>
<div class="a" style="left:941px;top:160px;width:23px;height:23px;background:#c8c6c6"></div>
<svg class="a" style="left:860px;top:420px" width="164" height="133" viewBox="860 420 164 133"><path d="M919 441 Q931 426 946 436" stroke="#222" stroke-width="3.3" fill="none" stroke-linecap="round"/><path d="M961 436 Q976 426 988 442" stroke="#222" stroke-width="3.3" fill="none" stroke-linecap="round"/><path d="M906 462 Q898 482 906 504" stroke="#3a3a3a" stroke-width="4" fill="none" opacity="0.7"/><ellipse cx="899" cy="482" rx="3.6" ry="9.5" fill="#5a5a5a" stroke="#8a8a8a" stroke-width="1.4"/><path d="M1001 462 Q1009 482 1001 504" stroke="#3a3a3a" stroke-width="4" fill="none" opacity="0.7"/><ellipse cx="1008.3" cy="482.5" rx="3.6" ry="9.5" fill="#5a5a5a" stroke="#8a8a8a" stroke-width="1.4"/><g opacity="0.84" fill="#cc2226"><path d="M901.5 490.0 L901.6 484.1 L902.1 479.2 L902.7 474.8 L903.7 470.6 L904.9 466.6 L906.4 462.8 L908.2 459.3 L910.2 456.0 L912.4 452.9 L914.9 450.1 L917.6 447.4 L920.6 445.1 L923.7 443.0 L927.1 441.2 L930.7 439.6 L934.5 438.3 L938.5 437.3 L942.7 436.6 L947.4 436.1 L953.0 436.0 L958.6 436.1 L963.3 436.6 L967.5 437.3 L971.5 438.3 L975.3 439.6 L978.9 441.2 L982.3 443.0 L985.4 445.1 L988.4 447.4 L991.1 450.1 L993.6 452.9 L995.8 456.0 L997.8 459.3 L999.6 462.8 L1001.1 466.6 L1002.3 470.6 L1003.3 474.8 L1003.9 479.2 L1004.4 484.1 L1004.5 490.0 C1004 505 996 518 991 524 L991 553 L916 553 L916 523 C908 517 902 508 901.5 490 Z"/><path d="M906 494 C897 500 893 512 896 523 L918 523 L918 494 Z"/><path d="M990 544 L1024 539 L1024 548 L990 553 Z"/></g><ellipse cx="935.4" cy="463.7" rx="14.2" ry="18.5" fill="#d6d6d6"/><ellipse cx="935.4" cy="463.9" rx="12.3" ry="16.6" fill="#1c1c1e"/><ellipse cx="930.2" cy="454.6" rx="6.5" ry="7.3" fill="#c4c4c4"/><ellipse cx="971.2" cy="463.7" rx="14.2" ry="18.5" fill="#d6d6d6"/><ellipse cx="971.2" cy="463.9" rx="12.3" ry="16.6" fill="#1c1c1e"/><ellipse cx="976.3" cy="454.6" rx="6.5" ry="7.3" fill="#c4c4c4"/><path d="M941.5 490.5 Q953 493.5 966.5 489.5 Q964 503 953.5 502.5 Q944.5 502 941.5 490.5 Z" fill="#d2d2d2" stroke="#3a1a1a" stroke-width="0.6"/><circle cx="897.5" cy="532" r="20" fill="#262b36" opacity="0.92"/><path d="M880 540 Q897 556 917 540 L917 553 L880 553 Z" fill="#4a5260" opacity="0.6"/><ellipse cx="892.5" cy="524" rx="11" ry="5.8" fill="#8991a0"/><rect x="895" y="533" width="23" height="4" fill="#a2a9b3"/><rect x="913" y="506" width="4" height="8" fill="#2a2a2a"/><path d="M990 507 Q1000 502 1010 507 L1010 545 L990 545 Z" fill="#2c2f36" opacity="0.85"/><rect x="999.5" y="510" width="3.5" height="30" fill="#6a7079"/></svg>
<div class="a" style="left:923.5px;top:523px;font-size:19px;line-height:24px;font-weight:bold;color:#ead8d8;transform:scaleX(0.9);transform-origin:0 0">inwepo</div>
<div class="a" style="left:926px;top:438.0px;font-size:8px;line-height:12px;color:rgba(255,214,214,0.58);font-weight:normal;">100</div>
<div class="a" style="left:921px;top:458.5px;font-size:7.6px;line-height:12px;color:rgba(255,214,214,0.58);font-weight:normal;">Effects</div>
<svg class="a" style="left:903.5px;top:460.5px" width="12" height="8"><path d="M1.5 4 Q6 0.5 10.5 4 Q6 7.5 1.5 4 Z" fill="none" stroke="rgba(255,140,140,0.55)" stroke-width="1"/><circle cx="6" cy="4" r="1.5" fill="rgba(255,140,140,0.55)"/></svg>
<svg class="a" style="left:917px;top:475.5px" width="12" height="8"><path d="M1.5 4 Q6 0.5 10.5 4 Q6 7.5 1.5 4 Z" fill="none" stroke="rgba(255,140,140,0.55)" stroke-width="1"/><circle cx="6" cy="4" r="1.5" fill="rgba(255,140,140,0.55)"/></svg>
<div class="a" style="left:934px;top:473.5px;font-size:7.6px;line-height:12px;color:rgba(255,214,214,0.58);font-weight:normal;">Bevel &amp; Emboss</div>
<svg class="a" style="left:917px;top:489.8px" width="12" height="8"><path d="M1.5 4 Q6 0.5 10.5 4 Q6 7.5 1.5 4 Z" fill="none" stroke="rgba(255,140,140,0.55)" stroke-width="1"/><circle cx="6" cy="4" r="1.5" fill="rgba(255,140,140,0.55)"/></svg>
<div class="a" style="left:934px;top:487.8px;font-size:7.6px;line-height:12px;color:rgba(255,214,214,0.58);font-weight:normal;">Inner Shadow</div>
<svg class="a" style="left:917px;top:504.1px" width="12" height="8"><path d="M1.5 4 Q6 0.5 10.5 4 Q6 7.5 1.5 4 Z" fill="none" stroke="rgba(255,140,140,0.55)" stroke-width="1"/><circle cx="6" cy="4" r="1.5" fill="rgba(255,140,140,0.55)"/></svg>
<div class="a" style="left:934px;top:502.1px;font-size:7.6px;line-height:12px;color:rgba(255,214,214,0.58);font-weight:normal;">Gradient Overlay</div>
<svg class="a" style="left:917px;top:518.4px" width="12" height="8"><path d="M1.5 4 Q6 0.5 10.5 4 Q6 7.5 1.5 4 Z" fill="none" stroke="rgba(255,140,140,0.55)" stroke-width="1"/><circle cx="6" cy="4" r="1.5" fill="rgba(255,140,140,0.55)"/></svg>
<div class="a" style="left:934px;top:516.4px;font-size:7.6px;line-height:12px;color:rgba(255,214,214,0.58);font-weight:normal;">Drop Shadow</div>
</body></html>
